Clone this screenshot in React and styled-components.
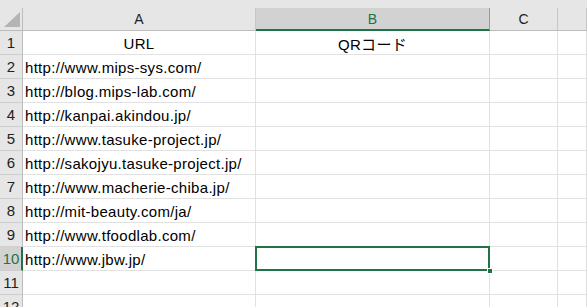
import styled, { createGlobalStyle } from 'styled-components';

const GlobalStyle = createGlobalStyle`
	html, body {
		margin: 0;
		padding: 0;
		background: #ffffff;
	}
	body {
		width: 587px;
		height: 307px;
		overflow: hidden;
		font-family: 'Liberation Sans', 'Noto Sans CJK JP', sans-serif;
	}
`;

const GREEN = '#217346';

const columns = ['A', 'B', 'C', ''];
const rows = [
	['URL', 'QRコード'],
	['http://www.mips-sys.com/'],
	['http://blog.mips-lab.com/'],
	['http://kanpai.akindou.jp/'],
	['http://www.tasuke-project.jp/'],
	['http://sakojyu.tasuke-project.jp/'],
	['http://www.macherie-chiba.jp/'],
	['http://mit-beauty.com/ja/'],
	['http://www.tfoodlab.com/'],
	['http://www.jbw.jp/'],
	[],
	[],
];

const SELECTED_ROW = 10;
const SELECTED_COL = 1;

const Window = styled.div`
	width: 587px;
	height: 307px;
	overflow: hidden;
	background: #e6e6e6;
	padding-top: 8px;
	box-sizing: border-box;
`;

const Grid = styled.div`
	display: grid;
	grid-template-columns: 23px 233px 234px 68px 1fr;
	grid-auto-rows: 24px;
	grid-template-rows: 23px;
	background: #ffffff;
`;

const Corner = styled.div`
	position: relative;
	background: #e6e6e6;
	border-right: 1px solid #bcbcbc;
	border-bottom: 1px solid #bcbcbc;
	box-sizing: border-box;

	&::after {
		content: '';
		position: absolute;
		right: 2px;
		bottom: 3px;
		width: 0;
		height: 0;
		border-left: 16px solid transparent;
		border-bottom: 15px solid #b4b4b4;
	}
`;

const ColHeader = styled.div`
	display: flex;
	align-items: center;
	justify-content: center;
	box-sizing: border-box;
	background: ${(p) => (p.$selected ? '#d2d2d2' : '#e6e6e6')};
	border-right: 1px solid ${(p) => (p.$selected ? '#9c9c9c' : '#c6c6c6')};
	border-bottom: ${(p) => (p.$selected ? `2px solid ${GREEN}` : '1px solid #bcbcbc')};
	padding-top: ${(p) => (p.$selected ? '1px' : '0')};
	color: ${(p) => (p.$selected ? GREEN : '#222')};
	font-size: 14px;
`;

const RowHeader = styled.div`
	display: flex;
	align-items: center;
	justify-content: center;
	box-sizing: border-box;
	background: ${(p) => (p.$selected ? '#d2d2d2' : '#e6e6e6')};
	border-right: ${(p) => (p.$selected ? `2px solid ${GREEN}` : '1px solid #bcbcbc')};
	border-bottom: 1px solid #cfcfcf;
	color: ${(p) => (p.$selected ? GREEN : '#222')};
	font-size: 15px;
	padding-left: ${(p) => (p.$selected ? '1px' : '0')};
`;

const Cell = styled.div`
	position: relative;
	display: flex;
	align-items: center;
	justify-content: ${(p) => (p.$center ? 'center' : 'flex-start')};
	box-sizing: border-box;
	padding: 1px 2px 0;
	border-right: 1px solid #e1e1e1;
	border-bottom: 1px solid #e1e1e1;
	font-size: 15px;
	letter-spacing: 0.3px;
	color: #000;
	white-space: nowrap;

	${(p) =>
		p.$active &&
		`
		&::before {
			content: '';
			position: absolute;
			left: -1px;
			top: -1px;
			right: -1px;
			bottom: -1px;
			border: 2px solid ${GREEN};
			z-index: 2;
		}
		&::after {
			content: '';
			position: absolute;
			right: -4px;
			bottom: -4px;
			width: 6px;
			height: 6px;
			background: ${GREEN};
			border: 1px solid #ffffff;
			box-sizing: border-box;
			z-index: 3;
		}
	`}
`;

export default function App() {
	return (
		<>
			<GlobalStyle />
			<Window>
				<Grid>
					<Corner />
					{columns.map((c, i) => (
						<ColHeader key={i} $selected={i === SELECTED_COL}>
							{c}
						</ColHeader>
					))}
					{rows.map((r, ri) => {
						const n = ri + 1;
						return [
							<RowHeader key={`h${n}`} $selected={n === SELECTED_ROW}>
								{n}
							</RowHeader>,
							...columns.map((_, ci) => (
								<Cell
									key={`${n}-${ci}`}
									$center={n === 1}
									$active={n === SELECTED_ROW && ci === SELECTED_COL}
								>
									{r[ci] || ''}
								</Cell>
							)),
						];
					})}
				</Grid>
			</Window>
		</>
	);
}
